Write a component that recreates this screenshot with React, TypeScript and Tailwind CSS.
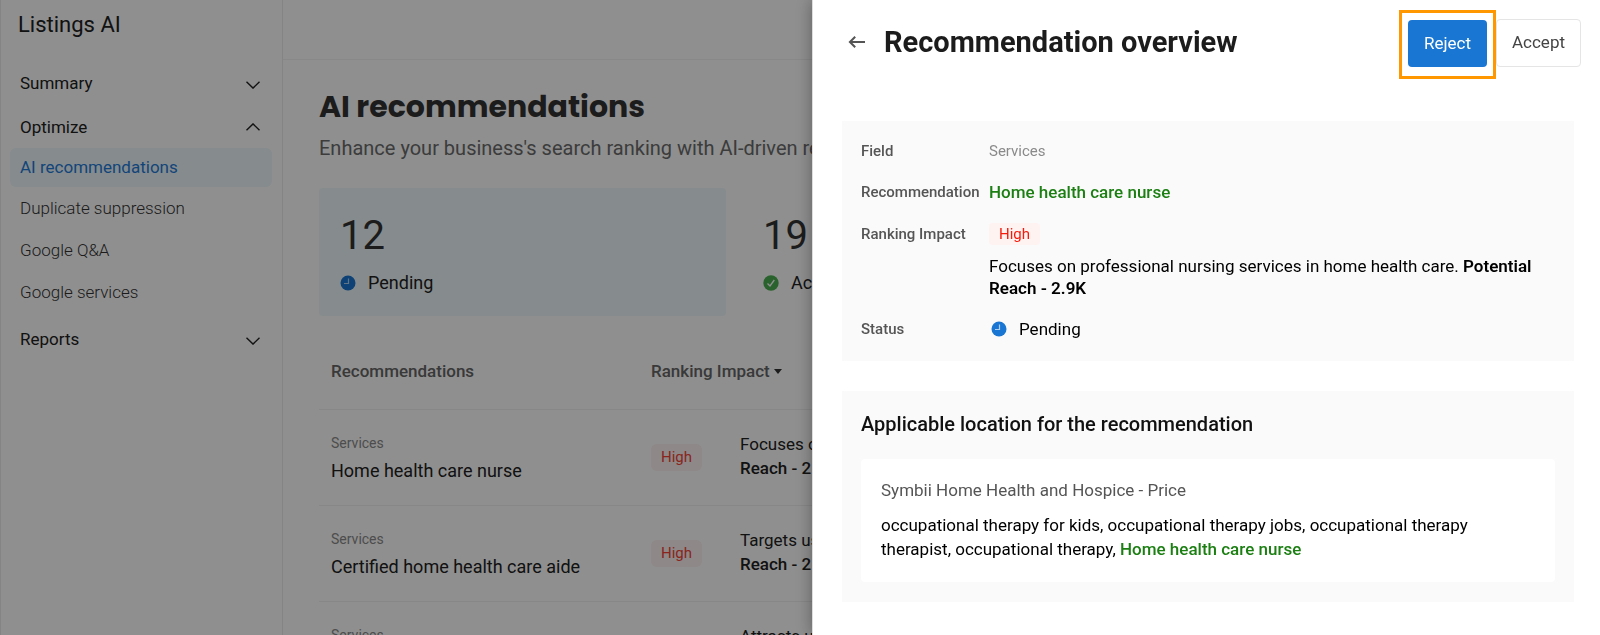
function ClockIcon() {
  return (
    <svg viewBox="0 0 16 16" className="size-4 shrink-0" aria-hidden="true">
      <circle cx="8" cy="8" r="7.5" fill="#1976d2" />
      <path d="M8.5 3.5V8.5H4" fill="none" stroke="#fff" strokeOpacity="0.65" strokeWidth="1.2" />
    </svg>
  );
}

function CheckIcon() {
  return (
    <svg viewBox="0 0 16 16" className="size-4 shrink-0" aria-hidden="true">
      <circle cx="8" cy="8" r="7.7" fill="#4caf50" />
      <path d="M4.5 8.5L7 11L11.3 5" fill="none" stroke="#fff" strokeWidth="1.3" />
    </svg>
  );
}

function BackIcon() {
  return (
    <svg viewBox="0 0 18 14" className="h-[14px] w-[18px]" fill="none" stroke="#555" strokeWidth="2" aria-hidden="true">
      <path d="M17 7H2M7.2 1.7L1.9 7L7.2 12.3" />
    </svg>
  );
}

function GroupButton({ label, open = false }: { label: string; open?: boolean }) {
  return (
    <button type="button" aria-expanded={open} className="flex h-11 w-full items-center justify-between pr-3 pl-[10px] text-[17px] leading-6 text-[#212121]">
      {label}
      {open ? (
        <svg viewBox="0 0 14 8" className="h-2 w-[14px]" fill="none" stroke="#222" strokeWidth="1.4" aria-hidden="true">
          <path d="M0.5 7.3L7 0.9L13.5 7.3" />
        </svg>
      ) : (
        <svg viewBox="0 0 14 8" className="mt-1 h-2 w-[14px]" fill="none" stroke="#222" strokeWidth="1.4" aria-hidden="true">
          <path d="M0.5 0.7L7 7.1L13.5 0.7" />
        </svg>
      )}
    </button>
  );
}

const links = ["Duplicate suppression", "Google Q&A", "Google services"];

const rows = [
  { name: "Home health care nurse", reason: "Focuses on professional nursing services in home health care." },
  { name: "Certified home health care aide", reason: "Targets users looking for certified aides in home health care." },
  { name: "Home health aide", reason: "Attracts users searching for aides who provide care at home." },
];

function Sidebar() {
  return (
    <nav className="w-[283px] shrink-0 border-x border-[#ececec] pr-[10px] pl-[9px]">
      <h2 className="px-2 pt-[9px] text-[22px] leading-8 text-[#212121]">Listings AI</h2>
      <div className="mt-5">
        <GroupButton label="Summary" />
        <GroupButton label="Optimize" open />
      </div>
      <a href="#ai" className="-mt-px flex h-[39px] items-center rounded-md bg-[#eff8fb] px-[10px] text-[17px] text-[#1f7cda]">
        AI recommendations
      </a>
      <ul className="pt-px pb-[3px]">
        {links.map((label) => (
          <li key={label}>
            <a href="#section" className="flex h-[42px] items-center px-[10px] text-[17px] font-light text-[#333]">
              {label}
            </a>
          </li>
        ))}
      </ul>
      <GroupButton label="Reports" />
    </nav>
  );
}

function Content() {
  return (
    <main className="min-w-0 grow">
      <div className="h-[60px] border-b border-[#f2f2f2]" />
      <div className="pt-[27px] pr-7 pl-9">
        <h1 className="font-[Poppins,Inter,sans-serif] text-[30px] leading-10 font-bold text-[#333]">AI recommendations</h1>
        <p className="mt-[7px] text-[20px] leading-7 text-[#6b6b6b]">
          Enhance your business's search ranking with AI-driven recommendations
        </p>
        <div className="mt-[26px] grid grid-cols-3 gap-4">
          <div className="h-32 rounded bg-[#eff8fb] px-[21px] pt-[25px]">
            <div className="text-[40px] leading-[46px] text-[#333]">12</div>
            <div className="mt-3 flex items-center gap-3 text-[18px] leading-6 text-[#212121]">
              <ClockIcon />
              Pending
            </div>
          </div>
          <div className="h-32 px-[21px] pt-[25px]">
            <div className="text-[40px] leading-[46px] text-[#333]">19</div>
            <div className="mt-3 flex items-center gap-3 text-[18px] leading-6 text-[#212121]">
              <CheckIcon />
              Accepted
            </div>
          </div>
        </div>
        <table className="mt-[18px] w-full table-fixed text-left">
          <thead>
            <tr className="h-[75px] border-b border-[#f0f0f0] text-[17px] text-[#666]">
              <th className="w-[332px] px-3 font-medium">Recommendations</th>
              <th className="w-[89px] whitespace-nowrap font-medium">
                <span className="inline-flex items-center gap-1">
                  Ranking Impact
                  <svg viewBox="0 0 8 5" className="h-[5px] w-2" aria-hidden="true">
                    <path d="M0 0H8L4 5Z" fill="#333" />
                  </svg>
                </span>
              </th>
              <th />
            </tr>
          </thead>
          <tbody>
            {rows.map((row) => (
              <tr key={row.name} className="h-24 border-b border-[#f0f0f0] align-top">
                <td className="px-3 pt-[21px]">
                  <div className="text-[14px] leading-6 text-[#8a8a8a]">Services</div>
                  <div className="mt-1 text-[18px] leading-6 text-[#212121]">{row.name}</div>
                </td>
                <td className="pt-[34px]">
                  <span className="inline-block rounded-md bg-[#fdf3f2] px-[10px] text-[15px] leading-[27px] text-[#f44336]">High</span>
                </td>
                <td className="pt-[22px] text-[17px] leading-6 text-[#212121]">
                  <div>{row.reason}</div>
                  <div className="font-medium">Reach - 2.9K</div>
                </td>
              </tr>
            ))}
          </tbody>
        </table>
      </div>
    </main>
  );
}

function Drawer() {
  return (
    <aside aria-label="Recommendation overview" className="fixed inset-y-0 right-0 w-[788px] overflow-y-auto border-l border-[#ddd] bg-white pl-[29px] text-black shadow-[0_0_16px_rgba(0,0,0,0.35)]">
      <header className="flex h-[104px] items-start justify-between pt-[10px] pr-[19px]">
        <div className="flex h-16 items-center gap-[18px] pl-[6px]">
          <button type="button" aria-label="Back">
            <BackIcon />
          </button>
          <h2 className="text-[29px] leading-9 font-bold text-[#1c1c1c]">Recommendation overview</h2>
        </div>
        <div className="flex items-center text-[17px]">
          <div className="border-3 border-[#ff9800] px-[6px] pt-[7px] pb-[9px]">
            <button type="button" className="h-[47px] rounded bg-[#1976d2] px-4 text-white">
              Reject
            </button>
          </div>
          <button type="button" className="-mt-[3px] h-12 rounded border border-[#e5e5e5] px-[15px] text-[#444]">
            Accept
          </button>
        </div>
      </header>
      <div className="mt-[17px] mr-[26px] flex flex-col gap-[30px]">
        <dl className="grid grid-cols-[128px_1fr] gap-y-[17px] bg-[#fafafa] px-[19px] pt-[18px] pb-5 leading-6">
          <dt className="text-[15px] font-medium text-[#555]">Field</dt>
          <dd className="text-[15px] text-[#8a8a8a]">Services</dd>
          <dt className="text-[15px] font-medium text-[#555]">Recommendation</dt>
          <dd className="text-[17px] font-medium text-[#1b7f12]">Home health care nurse</dd>
          <dt className="pt-px text-[15px] font-medium text-[#555]">Ranking Impact</dt>
          <dd className="pt-px pb-px">
            <span className="inline-block rounded bg-[#fff3f2] px-[10px] text-[15px] leading-[22px] text-[#f51b0b]">High</span>
            <p className="mt-[9px] text-[17px] leading-[22px]">
              Focuses on professional nursing services in home health care. <strong className="font-semibold">Potential Reach - 2.9K</strong>
            </p>
          </dd>
          <dt className="text-[15px] font-medium text-[#555]">Status</dt>
          <dd className="flex items-center gap-3 pl-[2px] text-[17px]">
            <ClockIcon />
            Pending
          </dd>
        </dl>
        <section className="bg-[#fafafa] px-[19px] pt-[19px] pb-5">
          <h3 className="text-[20px] leading-7 font-medium text-[#111]">Applicable location for the recommendation</h3>
          <div className="mt-[21px] rounded bg-white px-5 pt-[19px] pb-[21px]">
            <p className="text-[17px] leading-6 text-[#555]">Symbii Home Health and Hospice - Price</p>
            <p className="mt-[11px] text-[17px] leading-6">
              occupational therapy for kids, occupational therapy jobs, occupational therapy therapist, occupational therapy,{" "}
              <strong className="font-medium text-[#1b7f12]">Home health care nurse</strong>
            </p>
          </div>
        </section>
      </div>
    </aside>
  );
}

export default function App() {
  return (
    <div className="font-[Roboto,sans-serif]">
      <div className="flex h-screen overflow-hidden bg-white">
        <Sidebar />
        <Content />
      </div>
      <div className="fixed inset-0 bg-black/44" />
      <Drawer />
    </div>
  );
}
